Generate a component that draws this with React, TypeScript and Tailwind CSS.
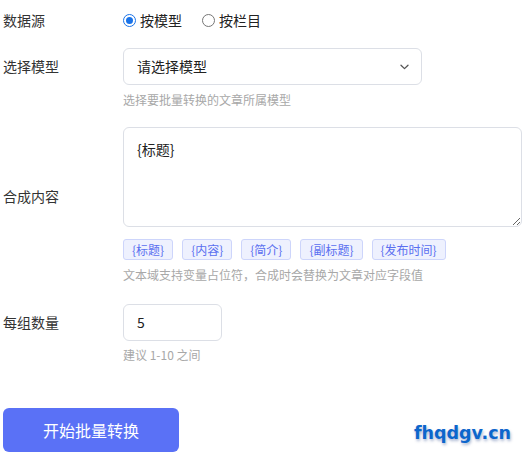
import React from "react";

const font = { fontFamily: '"Noto Sans CJK SC", "Noto Sans", sans-serif' };

function Radio({ checked, label }: { checked: boolean; label: string }) {
  return (
    <label className="flex items-center gap-[4px] cursor-pointer">
      <span
        className={
          checked
            ? "w-[13px] h-[13px] rounded-full border border-[#1a73e8] flex items-center justify-center bg-white"
            : "w-[13px] h-[13px] rounded-full border border-[#767676] bg-white"
        }
      >
        {checked && <span className="w-[7px] h-[7px] rounded-full bg-[#1a73e8]" />}
      </span>
      <span className="text-[14px] text-[#222] leading-[20px]">{label}</span>
    </label>
  );
}

export default function App() {
  const tags = ["{标题}", "{内容}", "{简介}", "{副标题}", "{发布时间}"];
  return (
    <div className="relative w-[526px] h-[457px] bg-white overflow-hidden" style={font}>
      <div className="flex flex-col pl-[3px] pt-[10px]">
        {/* 数据源 */}
        <div className="flex items-center h-[20px]">
          <div className="w-[120px] text-[14px] text-[#333] leading-[20px]">数据源</div>
          <div className="flex items-center gap-[20px]">
            <Radio checked label="按模型" />
            <Radio checked={false} label="按栏目" />
          </div>
        </div>

        {/* 选择模型 */}
        <div className="flex mt-[18px]">
          <div className="w-[120px] h-[37px] flex items-center text-[14px] text-[#333]">选择模型</div>
          <div className="flex flex-col">
            <div className="w-[299px] h-[37px] border border-[#dcdfe6] rounded-[6px] flex items-center justify-between pl-[13px] pr-[12px]">
              <span className="text-[14px] text-[#222]">请选择模型</span>
              <svg width="9" height="6" viewBox="0 0 9 6" fill="none">
                <path d="M1 1.2 L4.5 4.6 L8 1.2" stroke="#555" strokeWidth="1.3" strokeLinecap="round" strokeLinejoin="round" />
              </svg>
            </div>
            <div className="mt-[6px] text-[12px] leading-[18px] text-[#a8a8a8]">选择要批量转换的文章所属模型</div>
          </div>
        </div>

        {/* 合成内容 */}
        <div className="flex mt-[18px]">
          <div className="w-[120px] pt-[59px] text-[14px] leading-[20px] text-[#333]">合成内容</div>
          <div className="flex flex-col">
            <textarea
              defaultValue="{标题}"
              className="w-[399px] h-[100px] border border-[#dcdfe6] rounded-[6px] pl-[13px] pr-[12px] py-[11px] text-[14px] leading-[20px] text-[#222] outline-none resize"
              style={font}
            />
            <div className="flex gap-[9px] mt-[12px]">
              {tags.map((t) => (
                <span
                  key={t}
                  className="h-[21px] px-[8px] flex items-center rounded-[3px] border border-[#cdd5fb] bg-[#eef1fe] text-[12px] text-[#5a6ff0]"
                >
                  {t}
                </span>
              ))}
            </div>
            <div className="mt-[6px] text-[12px] leading-[18px] text-[#a8a8a8]">文本域支持变量占位符，合成时会替换为文章对应字段值</div>
          </div>
        </div>

        {/* 每组数量 */}
        <div className="flex mt-[20px]">
          <div className="w-[120px] h-[37px] flex items-center text-[14px] text-[#333]">每组数量</div>
          <div className="flex flex-col">
            <div className="w-[99px] h-[37px] border border-[#dcdfe6] rounded-[6px] flex items-center pl-[13px] text-[14px] text-[#222]">
              5
            </div>
            <div className="mt-[5px] text-[12px] leading-[18px] text-[#a8a8a8]">建议 1-10 之间</div>
          </div>
        </div>

        {/* button */}
        <div className="mt-[44px]">
          <button className="w-[176px] h-[44px] rounded-[6px] bg-[#5a71f6] text-white text-[16px]" style={font}>
            开始批量转换
          </button>
        </div>
      </div>

      <div
        className="absolute right-[15px] top-[421px] text-[17.5px] font-bold text-[#0c66cc] leading-[24px] [text-shadow:1px_2px_3px_rgba(0,40,120,0.35)]"
        style={{ fontFamily: '"DejaVu Sans", sans-serif' }}
      >
        fhqdgv.cn
      </div>
    </div>
  );
}
